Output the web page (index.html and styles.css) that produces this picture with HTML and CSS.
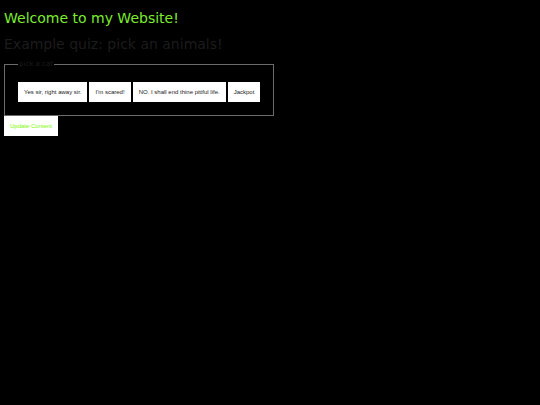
FILE: index.html
```html
<!DOCTYPE html>
<html lang="en">
<head>
  <meta charset="UTF-8">
  <title>My Website</title>
  <link rel="stylesheet" href="styles.css">
</head>
<body>
  <h1>Welcome to my Website!</h1>
  <h2>Example quiz: pick an animals!</h2>
  <fieldset class="quiz">
    <legend>pick a cat</legend>
    <div class="answers">
      <button type="button">Yes sir, right away sir.</button>
      <button type="button">I'm scared!</button>
      <button type="button">NO. I shall end thine pitiful life.</button>
      <button type="button">Jackpot</button>
    </div>
  </fieldset>
  <button type="button" class="update">Update Content</button>
</body>
</html>
```

FILE: styles.css
```css
body {
  margin: 10px 4px;
  background: #000;
  color: #1c1c1c;
  font-family: Verdana, "DejaVu Sans", sans-serif;
  font-size: 7px;
}

h1, h2 {
  margin: 0;
  font-size: 14px;
  font-weight: normal;
  line-height: 16px;
}
h1 {
  margin-bottom: 10px;
  color: #7cec2c;
}
h2 { margin-bottom: 8px; }

.quiz {
  width: fit-content;
  margin: 0;
  padding: 14px 13px 13px;
  border: 1px solid #6c6c6c;
}
legend {
  padding: 0 1px;
  line-height: 8px;
}
.answers {
  display: flex;
  gap: 2px;
}

button {
  padding: 0 6px;
  border: none;
  background: #fff;
  color: #222;
  font-family: "Liberation Sans", Arial, sans-serif;
  font-size: 6px;
  line-height: 20px;
  cursor: pointer;
}
.update {
  display: block;
  color: #7cfc00;
}
```
